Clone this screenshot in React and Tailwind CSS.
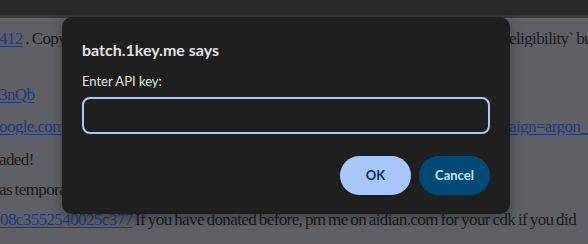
const serif = { fontFamily: '"Liberation Serif", "DejaVu Serif", serif' };

function Link({ children }) {
    return <span className="text-[#1e3a82] underline underline-offset-2">{children}</span>;
}

function PageLine({ height, left, right }) {
    return (
        <div className={`flex items-end whitespace-nowrap ${height}`}>
            <div className="w-[62px] shrink-0 overflow-hidden">
                <span className="ml-[-1px]">{left}</span>
            </div>
            <div className="ml-[447px] overflow-hidden">{right}</div>
        </div>
    );
}

export default function App() {
    return (
        <div className="relative h-[244px] w-[588px] overflow-hidden bg-[#5f6065]">
            <div className="h-[15px] bg-[#292929]" />
            <div className="h-[3px] bg-[#3a3a3a]" />

            {/* dimmed page behind the prompt */}
            <div
                className="pt-[4px] text-[17px] leading-none tracking-[-0.6px] [word-spacing:-1px] text-[#1b1b1d]"
                style={serif}
            >
                <PageLine
                    height="h-[25px]"
                    left={<><Link>412</Link> . Copy the token</>}
                    right={<>eligibility` button</>}
                />
                <PageLine height="h-[56px]" left={<Link>3nQb</Link>} />
                <PageLine
                    height="h-[32px]"
                    left={<Link>oogle.com/search</Link>}
                    right={<Link>aign=argon_test</Link>}
                />
                <PageLine height="h-[33px]" left={<>aded!</>} />
                <PageLine height="h-[30px]" left={<>as temporarily</>} />
                <div className="flex h-[30px] items-end whitespace-nowrap">
                    <Link>08c3552540025c377</Link>
                    <span>&nbsp;If you have donated before, pm me on aidian.com for your cdk if you did</span>
                </div>
            </div>

            {/* browser prompt dialog */}
            <div
                className="absolute left-[62px] top-[17px] h-[197px] w-[448px] rounded-[10px] bg-[#1f1f1f] px-5 pt-[23px] shadow-[0_4px_12px_rgba(0,0,0,0.35)]"
                style={{ fontFamily: 'Lato, "Noto Sans", sans-serif' }}
            >
                <h1 className="text-[16px] font-bold leading-[20px] text-[#e3e3e3]">batch.1key.me says</h1>
                <p className="mt-[13px] text-[13px] leading-[16px] text-[#e3e3e3]">Enter API key:</p>
                <div className="mt-[8px] h-[37px] w-[408px] rounded-[8px] border-2 border-[#a8c7fa]" />
                <div className="mt-[22px] flex justify-end gap-2">
                    <button className="h-[39px] w-[71px] rounded-full bg-[#a8c7fa] text-[13px] font-bold text-[#062e6f]">
                        OK
                    </button>
                    <button className="h-[39px] w-[71px] rounded-full bg-[#004a77] text-[13px] font-bold text-[#c2e7ff]">
                        Cancel
                    </button>
                </div>
            </div>
        </div>
    );
}
